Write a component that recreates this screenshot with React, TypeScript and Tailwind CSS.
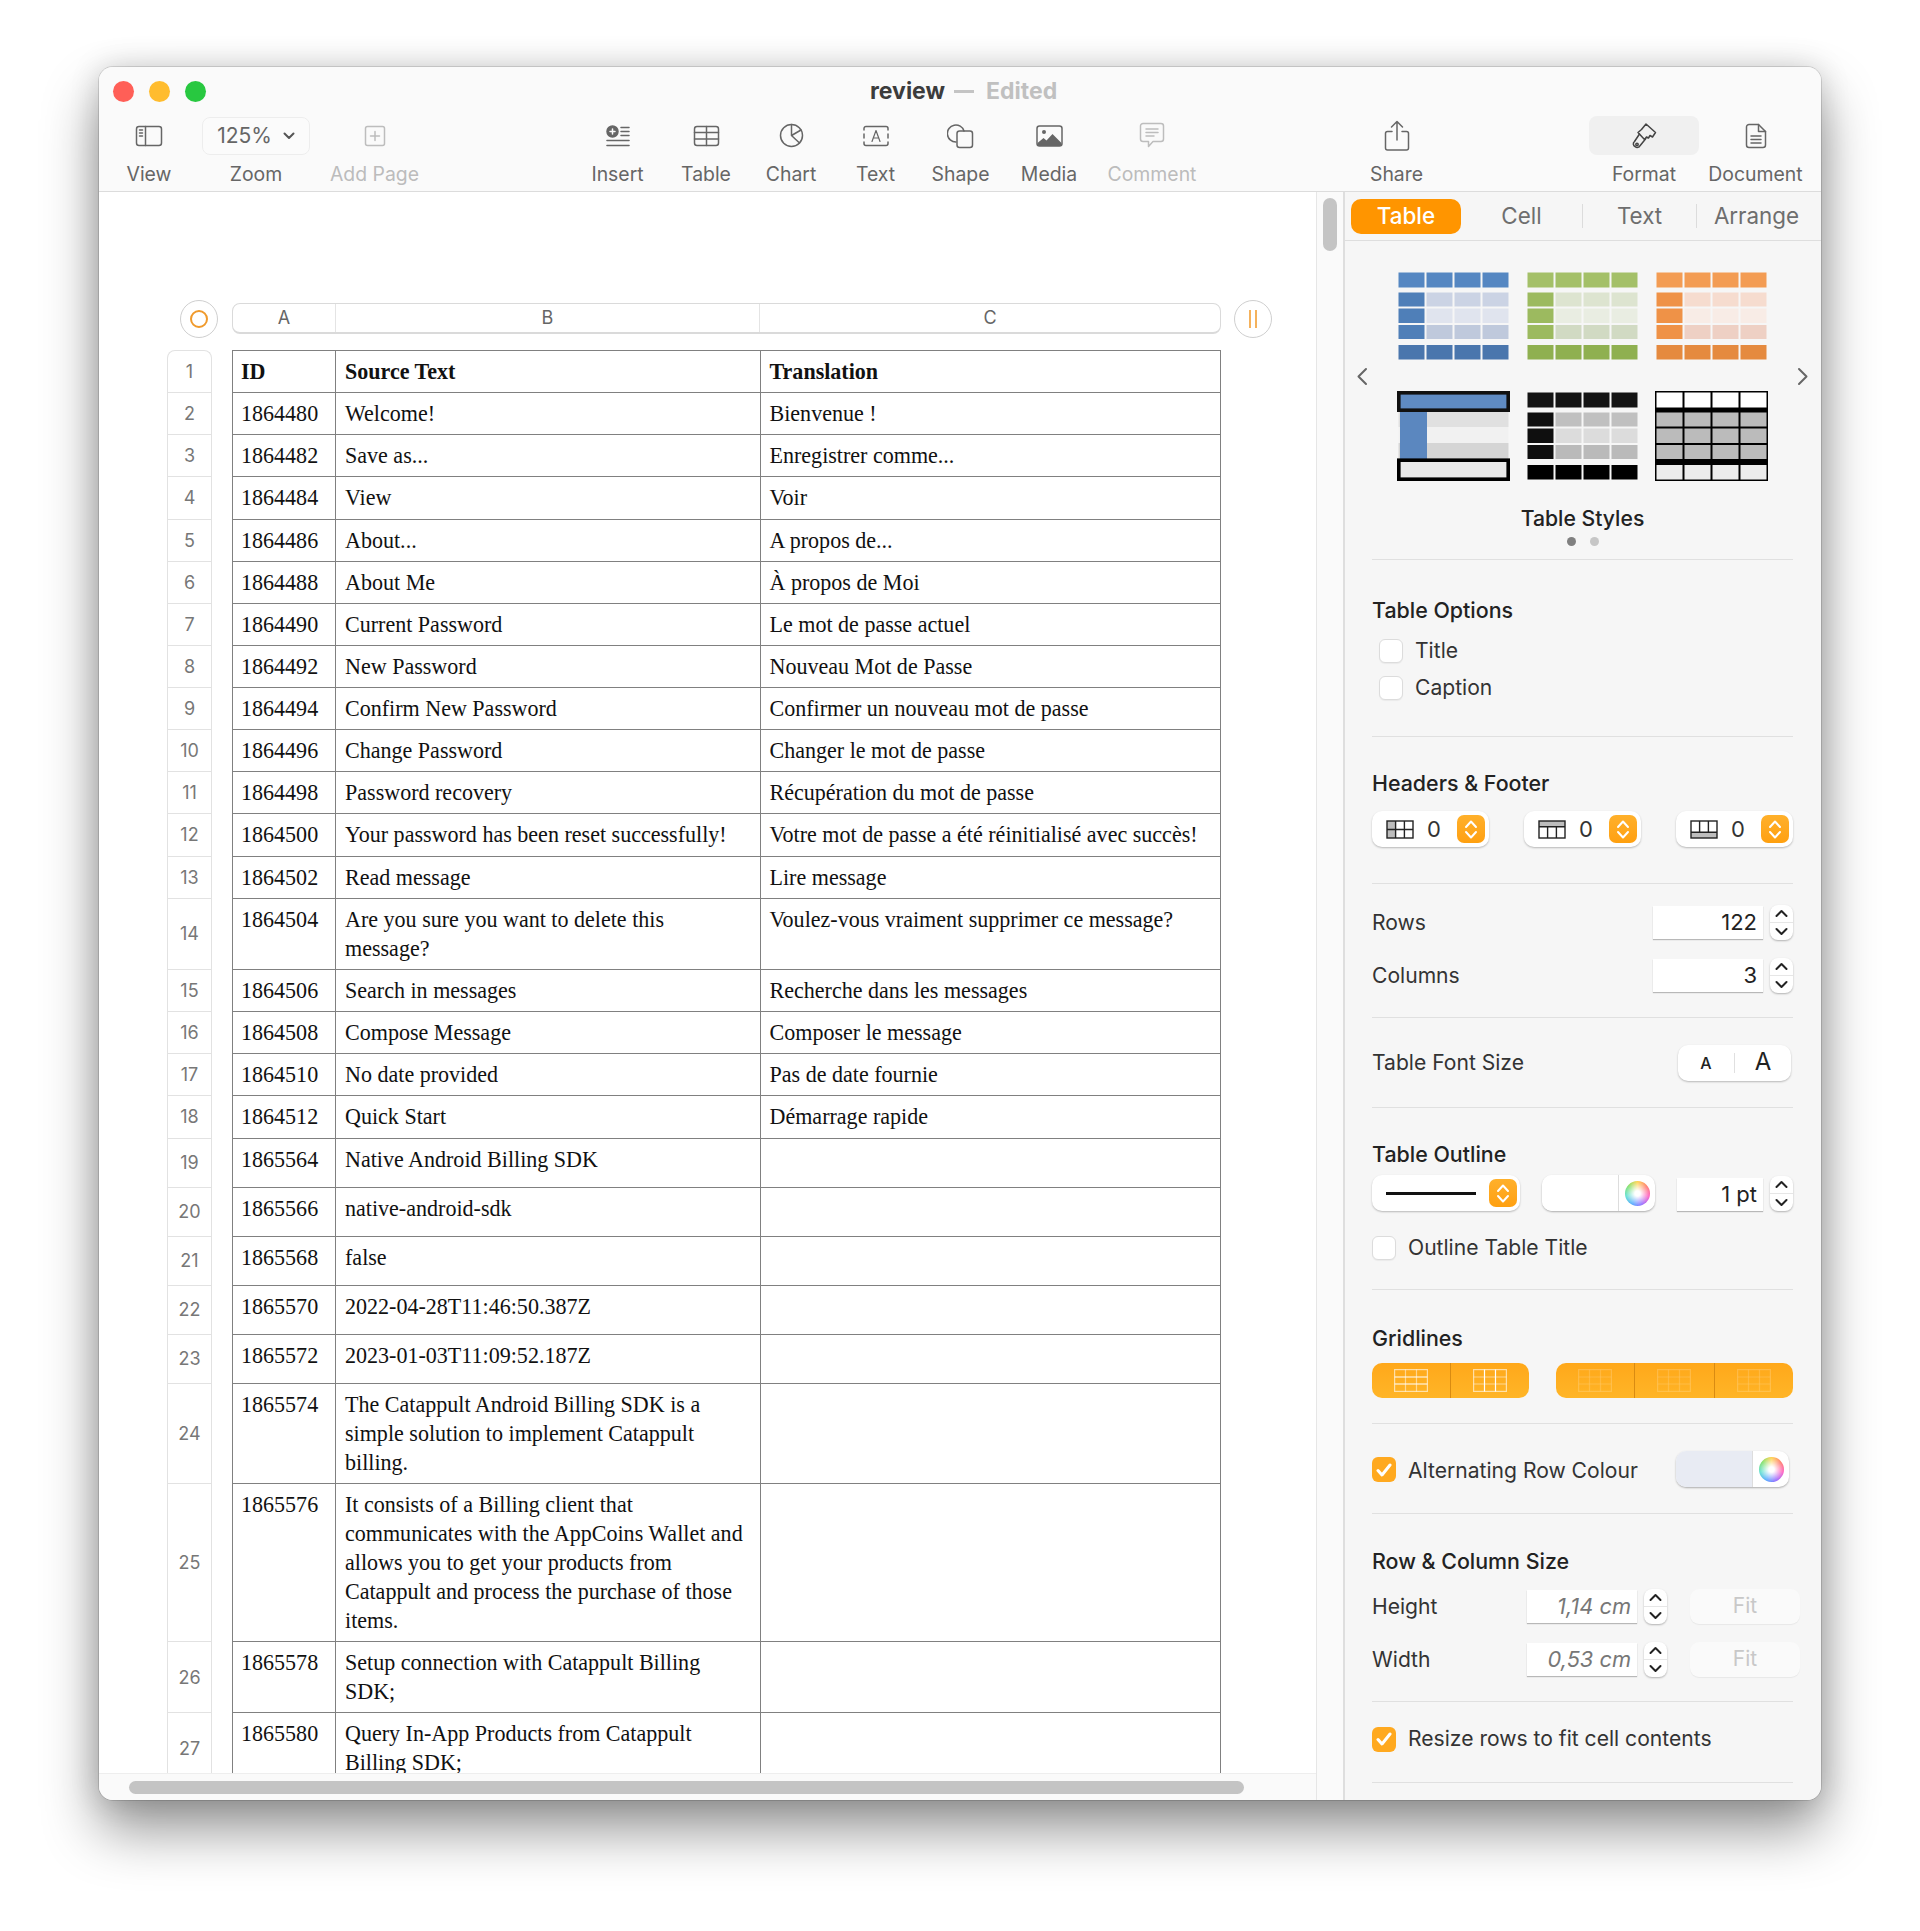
import React from "react";

const rows: { id: string; b: string; c: string; h: string; bold?: boolean }[] = [
  { id: "ID", b: "Source Text", c: "Translation", h: "h-[42.13px]", bold: true },
  { id: "1864480", b: "Welcome!", c: "Bienvenue !", h: "h-[42.13px]" },
  { id: "1864482", b: "Save as...", c: "Enregistrer comme...", h: "h-[42.13px]" },
  { id: "1864484", b: "View", c: "Voir", h: "h-[42.13px]" },
  { id: "1864486", b: "About...", c: "A propos de...", h: "h-[42.13px]" },
  { id: "1864488", b: "About Me", c: "À propos de Moi", h: "h-[42.13px]" },
  { id: "1864490", b: "Current Password", c: "Le mot de passe actuel", h: "h-[42.13px]" },
  { id: "1864492", b: "New Password", c: "Nouveau Mot de Passe", h: "h-[42.13px]" },
  { id: "1864494", b: "Confirm New Password", c: "Confirmer un nouveau mot de passe", h: "h-[42.13px]" },
  { id: "1864496", b: "Change Password", c: "Changer le mot de passe", h: "h-[42.13px]" },
  { id: "1864498", b: "Password recovery", c: "Récupération du mot de passe", h: "h-[42.13px]" },
  { id: "1864500", b: "Your password has been reset successfully!", c: "Votre mot de passe a été réinitialisé avec succès!", h: "h-[42.13px]" },
  { id: "1864502", b: "Read message", c: "Lire message", h: "h-[42.13px]" },
  { id: "1864504", b: "Are you sure you want to delete this\nmessage?", c: "Voulez-vous vraiment supprimer ce message?", h: "h-[71.4px]" },
  { id: "1864506", b: "Search in messages", c: "Recherche dans les messages", h: "h-[42.13px]" },
  { id: "1864508", b: "Compose Message", c: "Composer le message", h: "h-[42.13px]" },
  { id: "1864510", b: "No date provided", c: "Pas de date fournie", h: "h-[42.13px]" },
  { id: "1864512", b: "Quick Start", c: "Démarrage rapide", h: "h-[42.13px]" },
  { id: "1865564", b: "Native Android Billing SDK", c: "", h: "h-[49px]" },
  { id: "1865566", b: "native-android-sdk", c: "", h: "h-[49px]" },
  { id: "1865568", b: "false", c: "", h: "h-[49px]" },
  { id: "1865570", b: "2022-04-28T11:46:50.387Z", c: "", h: "h-[49px]" },
  { id: "1865572", b: "2023-01-03T11:09:52.187Z", c: "", h: "h-[49px]" },
  { id: "1865574", b: "The Catappult Android Billing SDK is a\nsimple solution to implement Catappult\nbilling.", c: "", h: "h-[100px]" },
  { id: "1865576", b: "It consists of a Billing client that\ncommunicates with the AppCoins Wallet and\nallows you to get your products from\nCatappult and process the purchase of those\nitems.", c: "", h: "h-[158.5px]" },
  { id: "1865578", b: "Setup connection with Catappult Billing\nSDK;", c: "", h: "h-[71px]" },
  { id: "1865580", b: "Query In-App Products from Catappult\nBilling SDK;", c: "", h: "h-[71px]" },
];

const I = "#666666";
const Ico = ({ w, h, children, c = I }: { w: number; h: number; children: React.ReactNode; c?: string }) => (
  <svg width={w} height={h} viewBox={`0 0 ${w} ${h}`} fill="none" stroke={c} strokeWidth="1.5" strokeLinecap="round" strokeLinejoin="round">
    {children}
  </svg>
);

const ViewIcon = () => (
  <Ico w={28} h={22}>
    <rect x="1.5" y="1.5" width="25" height="19" rx="2.5" />
    <path d="M10.5 1.5v19M4.5 5h3M4.5 8h3M4.5 11h3" />
  </Ico>
);
const AddPageIcon = () => (
  <Ico w={22} h={22} c="#bdbdbd">
    <rect x="1.5" y="1.5" width="19" height="19" rx="2" />
    <path d="M11 6.5v9M6.5 11h9" />
  </Ico>
);
const InsertIcon = () => (
  <Ico w={24} h={22}>
    <circle cx="6.5" cy="6.5" r="5.5" fill="#666" />
    <path d="M6.5 4v5M4 6.5h5" stroke="#fafafa" />
    <path d="M15 2.5h8M15 6.5h8M15 10.5h8" />
    <path d="M1 15.5h22M1 20.5h22" strokeWidth="1.6" />
  </Ico>
);
const TableIcon = () => (
  <Ico w={27} h={22}>
    <rect x="1.5" y="1.5" width="24" height="19" rx="2.5" />
    <path d="M1.5 7.5h24M1.5 14h24M13.5 1.5v19" />
  </Ico>
);
const ChartIcon = () => (
  <Ico w={25} h={25}>
    <circle cx="12.5" cy="12.5" r="11" />
    <path d="M12.5 1.5v11l8 7.5M12.5 12.5l9.5-5.5" />
  </Ico>
);
const TextIcon = () => (
  <Ico w={28} h={22}>
    <path d="M2 5V3.5a2 2 0 0 1 2-2h20a2 2 0 0 1 2 2V5M2 9v4M26 9v4M2 17v1.5a2 2 0 0 0 2 2h20a2 2 0 0 0 2-2V17" />
    <path d="M10 16.5 14 5.5l4 11M11.3 13h5.4" strokeWidth="1.2" />
  </Ico>
);
const ShapeIcon = () => (
  <Ico w={27} h={27}>
    <path d="M9 20a8.5 8.5 0 1 1 8-11" />
    <rect x="10" y="9" width="15.5" height="16.5" rx="2.5" />
  </Ico>
);
const MediaIcon = () => (
  <Ico w={27} h={22}>
    <rect x="1" y="1" width="25" height="20" rx="2.5" />
    <circle cx="8" cy="7" r="2" fill="#666" stroke="none" />
    <path d="M1.5 18l6-5 3 2.5 6-6.5 9 9v1a2 2 0 0 1-2 2H3.5a2 2 0 0 1-2-2z" fill="#666" stroke="none" />
  </Ico>
);
const CommentIcon = () => (
  <Ico w={26} h={27} c="#bdbdbd">
    <path d="M4 1.5h18a2.5 2.5 0 0 1 2.5 2.5v13a2.5 2.5 0 0 1-2.5 2.5H14l-4.5 5v-5H4A2.5 2.5 0 0 1 1.5 17V4A2.5 2.5 0 0 1 4 1.5z" />
    <path d="M7 7h12M7 10.5h12M7 14h8" />
  </Ico>
);
const ShareIcon = () => (
  <Ico w={26} h={32}>
    <path d="M8 11.5H3.5a2 2 0 0 0-2 2V28a2 2 0 0 0 2 2h19a2 2 0 0 0 2-2V13.5a2 2 0 0 0-2-2H18" />
    <path d="M13 20V2M7.5 7 13 1.5 18.5 7" />
  </Ico>
);
const FormatIcon = () => (
  <Ico w={26} h={28} c="#444444">
    <path d="M15 2l9.5 8.5-3 4.5-2.5-1.5-1.5 2.5-2-1-2 2.5L7 10.5l3.5-3z" />
    <path d="M8.5 12 3.5 19.5a3 3 0 0 0 .8 5.2 3 3 0 0 0 4.7-1L14.5 17" />
    <circle cx="6" cy="22.5" r="1.2" />
  </Ico>
);
const DocIcon = () => (
  <Ico w={22} h={26}>
    <path d="M4 1.5h9.5l7 7V22a2.5 2.5 0 0 1-2.5 2.5H4A2.5 2.5 0 0 1 1.5 22V4A2.5 2.5 0 0 1 4 1.5z" />
    <path d="M13.5 1.5V8.5h7M6 13h10M6 16.5h10M6 20h10" />
  </Ico>
);
const SmallChev = () => (
  <svg width="12" height="8" viewBox="0 0 12 8" fill="none" stroke="#555" strokeWidth="2" strokeLinecap="round" strokeLinejoin="round">
    <path d="M1.5 1.5 6 6l4.5-4.5" />
  </svg>
);

const Tool = ({ label, box, children, muted, active }: { label: string; box: string; children: React.ReactNode; muted?: boolean; active?: boolean }) => (
  <div className={`flex flex-col items-center ${box}`}>
    <div className={`flex h-[39px] w-full items-center justify-center rounded-lg ${active ? "bg-[#f0f0f0]" : ""}`}>{children}</div>
    <div className={`mt-[6px] text-[19.4px] leading-[26px] whitespace-nowrap ${muted ? "text-[#bcbcbc]" : "text-[#666666]"}`}>{label}</div>
  </div>
);

type Th = { cells: { head: string; col: string; body: string[]; foot: string }; bg?: string };
const colsX = [1.5, 29.5, 57.5, 85.5];
const rowsY: [number, number][] = [[21.5, 14], [37.5, 14.5], [54, 14]];

const ThumbGrid = ({ cells, bg, headFill }: Th & { headFill?: string }) => (
  <svg width="113" height="90" viewBox="0 0 113 90">
    {bg && <rect x="0" y="0" width="113" height="90" fill={bg} />}
    {colsX.map((x) => (
      <rect key={x} x={x} y="1.5" width="26" height="15" fill={headFill || cells.head} />
    ))}
    {rowsY.map(([y, h], r) =>
      colsX.map((x, i) => <rect key={`${r}${i}`} x={x} y={y} width="26" height={h} fill={i === 0 ? cells.col : cells.body[r]} />)
    )}
    {colsX.map((x) => (
      <rect key={`f${x}`} x={x} y="74" width="26" height="14.5" fill={cells.foot} />
    ))}
  </svg>
);

const OutlineThumb = () => (
  <svg width="113" height="90" viewBox="0 0 113 90">
    <rect x="1.5" y="20" width="110" height="16" fill="#e0e0e0" />
    <rect x="1.5" y="36" width="110" height="16" fill="#f1f1f1" />
    <rect x="1.5" y="52" width="110" height="18" fill="#d5d5d5" />
    <rect x="3" y="20" width="27" height="50" fill="#5b87bf" />
    <rect x="1.8" y="1.8" width="109.4" height="17.4" fill="#5f8bc3" stroke="#111" strokeWidth="3.6" />
    <rect x="1.8" y="69.2" width="109.4" height="19" fill="#e9e9e9" stroke="#000" strokeWidth="3.6" />
  </svg>
);

const Check = () => (
  <div className="flex h-[25px] w-[24px] items-center justify-center rounded-[6px] bg-[#ffa91f]">
    <svg width="16" height="14" viewBox="0 0 16 14" fill="none" stroke="#fff" strokeWidth="3" strokeLinecap="round" strokeLinejoin="round">
      <path d="M2 7.5 6 12l8-10" />
    </svg>
  </div>
);
const Box = () => <div className="h-[24px] w-[24px] rounded-[6px] border border-[#dcdcdc] bg-white shadow-[0_1px_1px_rgba(0,0,0,0.05)]" />;

const OrangeBtn = () => (
  <div className="flex h-[28px] w-[28px] items-center justify-center rounded-[7px] bg-gradient-to-b from-[#ffb02a] to-[#ffa00f]">
    <svg width="14" height="21" viewBox="0 0 14 21" fill="none" stroke="#fff" strokeWidth="2" strokeLinecap="round" strokeLinejoin="round">
      <path d="M2 8 7 2.5 12 8M2 13l5 5.5 5-5.5" />
    </svg>
  </div>
);
const NumStepper = () => (
  <div className="relative h-[35px] w-[23px] rounded-[8px] bg-white shadow-[0_1px_2px_rgba(0,0,0,0.28)]">
    <svg width="23" height="35" viewBox="0 0 23 35" fill="none" stroke="#222" strokeWidth="2" strokeLinecap="round" strokeLinejoin="round">
      <path d="M6.5 11 11.5 6l5 5M6.5 24l5 5 5-5" />
    </svg>
    <div className="absolute left-0 right-0 top-[17px] h-px bg-[#e6e6e6]" />
  </div>
);
const Field = ({ box, value, italic }: { box: string; value: string; italic?: boolean }) => (
  <div className={`flex items-center justify-end bg-white pr-[6px] text-[#222] shadow-[0_1px_1px_rgba(0,0,0,0.25)] ${box} ${italic ? "italic text-[#777777]" : ""}`}>{value}</div>
);
const Wheel = () => (
  <div className="h-[25px] w-[25px] rounded-full bg-[radial-gradient(circle,#ffffff_15%,rgba(255,255,255,0)_70%),conic-gradient(#ffd24d,#ff7a6b,#ff5fc0,#9a6bff,#54a8ff,#5fe0d0,#7fe06a,#ffd24d)]" />
);
const Well = ({ left }: { left: string }) => (
  <div className="flex h-[36px] w-[113px] overflow-hidden rounded-[10px] bg-white shadow-[0_1px_2px_rgba(0,0,0,0.3)]">
    <div className={`h-full w-[77px] border-r border-[#dddddd] ${left}`} />
    <div className="flex flex-1 items-center justify-center">
      <Wheel />
    </div>
  </div>
);

const HF = ({ kind }: { kind: 0 | 1 | 2 }) => (
  <svg width="28" height="19" viewBox="0 0 28 19" fill="none" stroke="#222" strokeWidth="1.4">
    {kind === 0 && <rect x="1" y="1" width="8.6" height="17" fill="#bdbdbd" stroke="none" />}
    {kind === 1 && <rect x="1" y="1" width="26" height="5.7" fill="#bdbdbd" stroke="none" />}
    {kind === 2 && <rect x="1" y="12.3" width="26" height="5.7" fill="#bdbdbd" stroke="none" />}
    <rect x="1" y="1" width="26" height="17" />
    <path d={kind === 0 ? "M1 9.5h26M9.6 1v17M18.4 1v17" : kind === 1 ? "M1 6.7h26M9.6 6.7V18M18.4 6.7V18" : "M1 12.3h26M9.6 1v11.3M18.4 1v11.3"} />
  </svg>
);
const HFStepper = ({ kind }: { kind: 0 | 1 | 2 }) => (
  <div className="flex h-[36px] w-[117px] items-center rounded-[10px] bg-white pl-[14px] shadow-[0_1px_2px_rgba(0,0,0,0.25)]">
    <HF kind={kind} />
    <span className="ml-[13px] w-[12px] text-center text-[22px] text-[#333]">0</span>
    <div className="ml-auto mr-[4px]">
      <OrangeBtn />
    </div>
  </div>
);
const GridLn = ({ v, h, dim }: { v?: number; h?: number; dim?: boolean }) => (
  <svg width="34" height="23" viewBox="0 0 34 23" fill="none" stroke="#fff" strokeWidth="1.2" opacity={dim ? 0.3 : 1} strokeOpacity={dim ? 1 : 0.8}>
    <rect x="0.6" y="0.6" width="32.8" height="21.8" strokeOpacity={0.6} />
    <path d="M0.6 8h32.8M0.6 15h32.8" strokeOpacity={h ? 1 : 0.5} />
    <path d="M11.5 0.6v21.8M22.5 0.6v21.8" strokeOpacity={v ? 1 : 0.5} />
  </svg>
);

const Sec = ({ cls, children }: { cls: string; children?: React.ReactNode }) => (
  <div className={`ml-[27px] w-[421px] border-b border-[#e0e0e0] ${cls}`}>{children}</div>
);
const H = ({ children }: { children: React.ReactNode }) => <div className="text-[21.4px] leading-[26px] font-medium text-[#222222]">{children}</div>;
const Lbl = ({ children, cls = "" }: { children: React.ReactNode; cls?: string }) => <div className={`text-[21.1px] leading-[26px] text-[#333333] ${cls}`}>{children}</div>;

export default function App() {
  return (
    <div className="h-[1931px] w-[1920px] overflow-hidden bg-white pl-[99px] pt-[67px] font-['Inter',sans-serif]">
      <div className="flex h-[1733px] w-[1722px] flex-col overflow-hidden rounded-[14px] bg-[#fafafa] shadow-[0_0_0_1px_rgba(0,0,0,0.12),0_30px_55px_rgba(0,0,0,0.42),0_0_30px_rgba(0,0,0,0.16)]">
        {/* toolbar */}
        <div className="h-[125px] shrink-0 border-b border-[#dcdcdc] bg-[#fafafa]">
          <div className="flex h-[49px] items-center pl-[14px]">
            <div className="h-[21px] w-[21px] rounded-full bg-[#ff5f57]" />
            <div className="ml-[15px] h-[21px] w-[21px] rounded-full bg-[#ffbc2e]" />
            <div className="ml-[15px] h-[21px] w-[21px] rounded-full bg-[#28c840]" />
            <div className="ml-[664px] flex items-center text-[23px] font-bold">
              <span className="text-[#3c3c3c]">review</span>
              <span className="ml-[9px] h-[3px] w-[20px] bg-[#c4c4c4]" />
              <span className="ml-[12px] text-[#c0c0c0]">Edited</span>
            </div>
          </div>
          <div className="flex">
            <Tool label="View" box="ml-[15px] w-[70px]"><ViewIcon /></Tool>
            <Tool label="Zoom" box="ml-[18px] w-[108px]">
              <div className="flex h-[38px] w-full items-center justify-center gap-[11px] rounded-lg border border-[#ededed] bg-[#fbfbfb] text-[21px] text-[#666666]">
                125% <SmallChev />
              </div>
            </Tool>
            <Tool label="Add Page" box="ml-[14.5px] w-[100px]" muted><AddPageIcon /></Tool>
            <Tool label="Insert" box="ml-[158px] w-[70px]"><InsertIcon /></Tool>
            <Tool label="Table" box="ml-[18.5px] w-[70px]"><TableIcon /></Tool>
            <Tool label="Chart" box="ml-[15px] w-[70px]"><ChartIcon /></Tool>
            <Tool label="Text" box="ml-[14.5px] w-[70px]"><TextIcon /></Tool>
            <Tool label="Shape" box="ml-[15px] w-[70px]"><ShapeIcon /></Tool>
            <Tool label="Media" box="ml-[18.5px] w-[70px]"><MediaIcon /></Tool>
            <Tool label="Comment" box="ml-[18px] w-[100px]" muted><CommentIcon /></Tool>
            <Tool label="Share" box="ml-[159.5px] w-[70px]"><ShareIcon /></Tool>
            <Tool label="Format" box="ml-[157.5px] w-[110px]" active><FormatIcon /></Tool>
            <Tool label="Document" box="ml-[6.5px] w-[100px]"><DocIcon /></Tool>
          </div>
        </div>

        <div className="flex min-h-0 flex-1">
          {/* canvas column */}
          <div className="flex w-[1217px] shrink-0 flex-col">
            <div className="min-h-0 flex-1 overflow-hidden bg-white pl-[68px] pt-[111px]">
              <div className="flex h-[31px] items-center">
                <div className="ml-[13px] mr-[14px] flex h-[38px] w-[38px] items-center justify-center rounded-full border border-[#cfcfcf] bg-white">
                  <div className="h-[18px] w-[18px] rounded-full border-2 border-[#f09a2c]" />
                </div>
                <div className="flex h-[31px] w-[989px] rounded-[8px] border border-b-2 border-[#dadada] text-center text-[18px] leading-[28px] text-[#666666]">
                  <div className="w-[103px] border-r border-[#e4e4e4]">A</div>
                  <div className="w-[424px] border-r border-[#e4e4e4]">B</div>
                  <div className="flex-1">C</div>
                </div>
                <div className="ml-[13px] flex h-[38px] w-[38px] items-center justify-center gap-[4px] rounded-full border border-[#cfcfcf] bg-white">
                  <div className="h-[18px] w-[2px] bg-[#f5b25c]" />
                  <div className="h-[18px] w-[2px] bg-[#f5b25c]" />
                </div>
              </div>
              <div className="mt-[16px] flex">
                <div className="w-[45px] shrink-0 overflow-hidden rounded-t-[8px] border border-b-0 border-[#e2e2e2]">
                  {rows.map((r, i) => (
                    <div key={i} className={`flex items-center justify-center border-b border-[#e2e2e2] text-[18px] text-[#777777] ${r.h}`}>{i + 1}</div>
                  ))}
                </div>
                <div className="ml-[20px] w-[989px] shrink-0 border-l border-t border-[#808080] font-['Liberation_Serif',serif] text-[22.05px] leading-[29px] text-[#111111]">
                  {rows.map((r, i) => (
                    <div key={i} className={`flex border-b border-[#808080] ${r.h} ${r.bold ? "font-bold" : ""}`}>
                      <div className="w-[103px] border-r border-[#808080] pl-[8px] pt-[6px]">{r.id}</div>
                      <div className="w-[424.5px] border-r border-[#808080] pl-[9px] pt-[6px] whitespace-pre-line">{r.b}</div>
                      <div className="flex-1 border-r border-[#808080] pl-[9px] pt-[6px]">{r.c}</div>
                    </div>
                  ))}
                </div>
              </div>
            </div>
            <div className="h-[27px] shrink-0 border-t border-[#eeeeee] bg-[#fafafa] pl-[30px] pt-[7px]">
              <div className="h-[13px] w-[1115px] rounded-full bg-[#c4c4c4]" />
            </div>
          </div>
          {/* vertical scroll gutter */}
          <div className="w-[27px] shrink-0 border-l border-[#e6e6e6] bg-[#fafafa] pl-[5.5px] pt-[6px]">
            <div className="h-[53px] w-[14px] rounded-full bg-[#c4c4c4]" />
          </div>
          {/* inspector */}
          <div className="min-w-0 flex-1 border-l-2 border-[#dedede] bg-[#f6f6f6]">
            <div className="flex h-[49px] items-center border-b border-[#dedede] pl-[6px] text-center text-[22.4px] text-[#6e6e6e]">
              <div className="flex h-[35px] w-[110px] items-center justify-center rounded-[10px] bg-[#ff9500] font-medium text-white">Table</div>
              <div className="w-[121px]">Cell</div>
              <div className="h-[24px] w-px bg-[#dcdcdc]" />
              <div className="w-[113px]">Text</div>
              <div className="h-[24px] w-px bg-[#dcdcdc]" />
              <div className="w-[119px]">Arrange</div>
            </div>

            <div className="pt-[30px]">
              <div className="flex items-center">
                <svg className="ml-[11px]" width="12" height="19" viewBox="0 0 12 19" fill="none" stroke="#666" strokeWidth="2" strokeLinecap="round" strokeLinejoin="round">
                  <path d="M10 2 2.5 9.5 10 17" />
                </svg>
                <div className="ml-[29px] grid grid-cols-[113px_113px_113px] gap-x-[16px] gap-y-[30px]">
                  <ThumbGrid cells={{ head: "#5587c2", col: "#4f7fb8", body: ["#cbd3e4", "#e0e4ee", "#bfc9dc"], foot: "#4a76ad" }} />
                  <ThumbGrid cells={{ head: "#a4c068", col: "#9cba5f", body: ["#dde4d0", "#e9ede2", "#d1dac3"], foot: "#8fb050" }} />
                  <ThumbGrid cells={{ head: "#f39c53", col: "#ef9247", body: ["#f6dccf", "#f8ece6", "#eed0c4"], foot: "#e58a3f" }} />
                  <OutlineThumb />
                  <ThumbGrid cells={{ head: "#141414", col: "#0f0f0f", body: ["#c0c0c0", "#dcdcdc", "#bababa"], foot: "#000000" }} />
                  <ThumbGrid bg="#000000" headFill="#ffffff" cells={{ head: "#ffffff", col: "#bbbbbb", body: ["#bbbbbb", "#bbbbbb", "#bbbbbb"], foot: "#ececec" }} />
                </div>
                <svg className="ml-[29px]" width="12" height="19" viewBox="0 0 12 19" fill="none" stroke="#666" strokeWidth="2" strokeLinecap="round" strokeLinejoin="round">
                  <path d="M2 2l7.5 7.5L2 17" />
                </svg>
              </div>
            </div>

            <Sec cls="h-[79px] pt-[24px]">
              <div className="text-center text-[21.2px] leading-[26px] font-medium text-[#222222]">Table Styles</div>
              <div className="mt-[6px] flex justify-center gap-[14px]">
                <div className="h-[9px] w-[9px] rounded-full bg-[#808080]" />
                <div className="h-[9px] w-[9px] rounded-full bg-[#c6c6c6]" />
              </div>
            </Sec>

            <Sec cls="h-[177px] pt-[37px]">
              <H>Table Options</H>
              <div className="mt-[15px] flex items-center gap-[12px] pl-[7px]"><Box /><Lbl>Title</Lbl></div>
              <div className="mt-[11px] flex items-center gap-[12px] pl-[7px]"><Box /><Lbl>Caption</Lbl></div>
            </Sec>

            <Sec cls="h-[147px] pt-[33px]">
              <H>Headers &amp; Footer</H>
              <div className="mt-[15px] flex justify-between">
                <HFStepper kind={0} />
                <HFStepper kind={1} />
                <HFStepper kind={2} />
              </div>
            </Sec>

            <Sec cls="h-[134px] pt-[21px]">
              <div className="flex h-[35px] items-center">
                <Lbl>Rows</Lbl>
                <Field box="ml-auto h-[33px] w-[110px] text-[22px]" value="122" />
                <div className="ml-[7px]"><NumStepper /></div>
              </div>
              <div className="mt-[18px] flex h-[35px] items-center">
                <Lbl>Columns</Lbl>
                <Field box="ml-auto h-[33px] w-[110px] text-[22px]" value="3" />
                <div className="ml-[7px]"><NumStepper /></div>
              </div>
            </Sec>

            <Sec cls="h-[90px] pt-[27px]">
              <div className="flex items-center">
                <Lbl>Table Font Size</Lbl>
                <div className="ml-auto mr-[2px] flex h-[36px] w-[113px] items-center rounded-[10px] bg-white text-[#222] shadow-[0_1px_2px_rgba(0,0,0,0.25)]">
                  <div className="flex h-[20px] w-[57px] items-center justify-center border-r border-[#e0e0e0] text-[16px] font-medium">A</div>
                  <div className="-mt-[3px] flex-1 text-center text-[24px] leading-[30px]">A</div>
                </div>
              </div>
            </Sec>

            <Sec cls="h-[182px] pt-[33px]">
              <H>Table Outline</H>
              <div className="mt-[8px] flex items-start">
                <div className="flex h-[36px] w-[148px] items-center rounded-[10px] bg-white pl-[14px] pr-[3px] shadow-[0_1px_2px_rgba(0,0,0,0.25)]">
                  <div className="h-[3px] w-[90px] bg-[#111]" />
                  <div className="ml-auto"><OrangeBtn /></div>
                </div>
                <div className="ml-[22px]"><Well left="bg-white" /></div>
                <Field box="ml-[22px] mt-[3px] h-[33px] w-[86px] text-[22px]" value="1 pt" />
                <div className="ml-[7px] mt-[1px]"><NumStepper /></div>
              </div>
              <div className="mt-[24px] flex items-center gap-[12px]"><Box /><Lbl>Outline Table Title</Lbl></div>
            </Sec>

            <Sec cls="h-[134px] pt-[35px]">
              <H>Gridlines</H>
              <div className="mt-[12px] flex justify-between">
                <div className="flex h-[35px] w-[157px] overflow-hidden rounded-[10px] bg-gradient-to-b from-[#ffa81a] to-[#ffb527]">
                  <div className="flex flex-1 items-center justify-center border-r border-[#d98b12]"><GridLn h={1} /></div>
                  <div className="flex flex-1 items-center justify-center"><GridLn v={1} /></div>
                </div>
                <div className="flex h-[35px] w-[237px] overflow-hidden rounded-[10px] bg-gradient-to-b from-[#ffa81a] to-[#ffb527]">
                  <div className="flex flex-1 items-center justify-center border-r border-[#d98b12]"><GridLn dim /></div>
                  <div className="flex flex-1 items-center justify-center border-r border-[#d98b12]"><GridLn dim /></div>
                  <div className="flex flex-1 items-center justify-center"><GridLn dim /></div>
                </div>
              </div>
            </Sec>

            <Sec cls="h-[90px] pt-[27px]">
              <div className="flex items-center gap-[12px]">
                <div className="mt-[1px]"><Check /></div>
                <Lbl cls="mt-[3px]">Alternating Row Colour</Lbl>
                <div className="ml-auto mr-[4px]"><Well left="bg-[#e8ebf3]" /></div>
              </div>
            </Sec>

            <Sec cls="h-[188px] pt-[34px]">
              <H>Row &amp; Column Size</H>
              <div className="mt-[14px] flex h-[36px] w-[428px] items-center">
                <Lbl cls="w-[155px] pt-[2px]">Height</Lbl>
                <Field italic box="h-[33px] w-[110px] text-[21.8px]" value="1,14 cm" />
                <div className="ml-[7px]"><NumStepper /></div>
                <div className="ml-[23px] flex h-[35px] w-[110px] items-center justify-center rounded-[9px] bg-[#fafafa] text-[21px] text-[#c8c8c8] shadow-[0_1px_1px_rgba(0,0,0,0.06)]">Fit</div>
              </div>
              <div className="mt-[17px] flex h-[36px] w-[428px] items-center">
                <Lbl cls="w-[155px] pt-[2px]">Width</Lbl>
                <Field italic box="h-[33px] w-[110px] text-[21.8px]" value="0,53 cm" />
                <div className="ml-[7px]"><NumStepper /></div>
                <div className="ml-[23px] flex h-[35px] w-[110px] items-center justify-center rounded-[9px] bg-[#fafafa] text-[21px] text-[#c8c8c8] shadow-[0_1px_1px_rgba(0,0,0,0.06)]">Fit</div>
              </div>
            </Sec>

            <Sec cls="h-[81px] pt-[24px]">
              <div className="flex items-center gap-[12px]"><Check /><Lbl>Resize rows to fit cell contents</Lbl></div>
            </Sec>
          </div>
        </div>
      </div>
    </div>
  );
}
